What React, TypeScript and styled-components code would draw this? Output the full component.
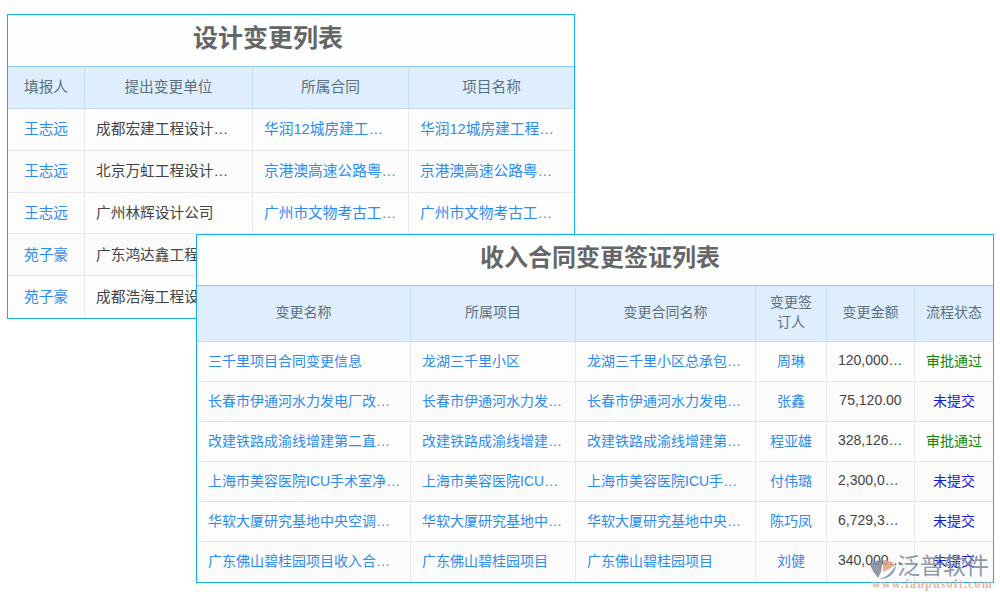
import styled, { createGlobalStyle } from "styled-components";

const GlobalStyle = createGlobalStyle`
  html, body {
    margin: 0;
    padding: 0;
    background: #fff;
    font-family: "Liberation Sans", "Noto Sans CJK SC", sans-serif;
  }
`;

const Page = styled.div`
  position: relative;
  width: 1000px;
  height: 600px;
  padding: 14px 0 0 7px;
  box-sizing: border-box;
  overflow: hidden;
`;

const Panel = styled.div<{ $width: number }>`
  width: ${({ $width }) => $width}px;
  box-sizing: border-box;
  border: 1px solid #12b0ee;
  background: #fff;
`;

const FrontPanel = styled(Panel)`
  position: absolute;
  left: 196px;
  top: 234px;
`;

const TitleBar = styled.div<{ $height: number; $size: number; $shift: number }>`
  height: ${({ $height }) => $height}px;
  box-sizing: border-box;
  padding-bottom: 9px;
  padding-left: ${({ $shift }) => ($shift > 0 ? $shift * 2 : 0)}px;
  padding-right: ${({ $shift }) => ($shift < 0 ? -$shift * 2 : 0)}px;
  display: flex;
  align-items: center;
  justify-content: center;
  font-size: ${({ $size }) => $size}px;
  font-weight: 700;
  color: #666;
  background: #fdfefe;
`;

const Table = styled.table<{ $size: number }>`
  width: 100%;
  table-layout: fixed;
  border-collapse: separate;
  border-spacing: 0;
  font-size: ${({ $size }) => $size}px;
`;

const HeadRow = styled.tr<{ $height: number }>`
  height: ${({ $height }) => $height}px;
  background: #deeefc;
`;

const HeadCell = styled.th<{ $nudge: number }>`
  box-sizing: border-box;
  padding: 0 10px ${({ $nudge }) => $nudge}px;
  font-weight: 400;
  line-height: 20px;
  color: #5b7082;
  text-align: center;
  border-top: 1px solid #8fc8ee;
  border-bottom: 1px solid #c5def2;
  border-right: 1px solid #c5def2;
  &:last-child {
    border-right: 0;
  }
`;

const Row = styled.tr<{ $height: number }>`
  height: ${({ $height }) => $height}px;
  background: #fdfdfe;
  &:nth-child(even) {
    background: #fbfbfc;
  }
`;

const colors = { link: "#2d8cf0", text: "#444", green: "#0a8a0a", blue: "#1a1ae0" };

const Cell = styled.td<{
  $tone: keyof typeof colors;
  $center?: boolean;
  $pad: number;
  $padEnd: number;
  $nudge: number;
}>`
  box-sizing: border-box;
  padding: 0 ${({ $padEnd }) => $padEnd}px ${({ $nudge }) => $nudge}px ${({ $pad }) => $pad}px;
  color: ${({ $tone }) => colors[$tone]};
  text-align: ${({ $center }) => ($center ? "center" : "left")};
  border-bottom: 1px solid #e8e8e8;
  border-right: 1px solid #e8e8e8;
  white-space: nowrap;
  overflow: hidden;
  text-overflow: ellipsis;
  &:last-child {
    border-right: 0;
  }
  tr:last-child > & {
    border-bottom: 0;
  }
`;

const Watermark = styled.div`
  position: absolute;
  left: 870px;
  top: 553px;
  width: 126px;
  display: flex;
  flex-wrap: wrap;
  align-items: flex-end;
  opacity: 0.88;
`;

const MarkLogo = styled.svg`
  display: block;
`;

const MarkName = styled.span`
  font-size: 23px;
  line-height: 26px;
  color: #7f8c99;
`;

const MarkUrl = styled.span`
  width: 100%;
  font-family: "Liberation Serif", serif;
  font-size: 12px;
  font-weight: 700;
  line-height: 11px;
  letter-spacing: 1.15px;
  color: #e3ab92;
  padding-left: 2px;
`;

type Col = {
  title: string;
  width: number;
  tone: keyof typeof colors;
  center?: boolean;
  pad?: number;
  padEnd?: number;
};

const designCols: Col[] = [
  { title: "填报人", width: 77, tone: "link", center: true, pad: 5 },
  { title: "提出变更单位", width: 168, tone: "text" },
  { title: "所属合同", width: 156, tone: "link" },
  { title: "项目名称", width: 165, tone: "link" },
];

const designRows = [
  ["王志远", "成都宏建工程设计有限公司", "华润12城房建工程合同", "华润12城房建工程项目部"],
  ["王志远", "北京万虹工程设计有限公司", "京港澳高速公路粤境段合同", "京港澳高速公路粤境段项目"],
  ["王志远", "广州林辉设计公司", "广州市文物考古工程合同", "广州市文物考古工程项目"],
  ["苑子豪", "广东鸿达鑫工程设计有限公司", "广东某工程合同", "广东某工程项目"],
  ["苑子豪", "成都浩海工程设计有限公司", "成都某工程合同", "成都某工程项目"],
];

const incomeCols: Col[] = [
  { title: "变更名称", width: 214, tone: "link", padEnd: 8 },
  { title: "所属项目", width: 165, tone: "link" },
  { title: "变更合同名称", width: 180, tone: "link" },
  { title: "变更签订人", width: 71, tone: "link", center: true },
  { title: "变更金额", width: 88, tone: "text", center: true },
  { title: "流程状态", width: 78, tone: "blue", center: true, pad: 5 },
];

const incomeRows = [
  ["三千里项目合同变更信息", "龙湖三千里小区", "龙湖三千里小区总承包工程合同", "周琳", "120,000.00", "审批通过"],
  ["长春市伊通河水力发电厂改造变更", "长春市伊通河水力发电厂", "长春市伊通河水力发电厂合同", "张鑫", "75,120.00", "未提交"],
  ["改建铁路成渝线增建第二直线变更", "改建铁路成渝线增建第二线", "改建铁路成渝线增建第二线合同", "程亚雄", "328,126.00", "审批通过"],
  ["上海市美容医院ICU手术室净化变更", "上海市美容医院ICU手术室", "上海市美容医院ICU手术室合同", "付伟璐", "2,300,000.00", "未提交"],
  ["华软大厦研究基地中央空调变更", "华软大厦研究基地中央空调", "华软大厦研究基地中央空调合同", "陈巧凤", "6,729,300.00", "未提交"],
  ["广东佛山碧桂园项目收入合同变更", "广东佛山碧桂园项目", "广东佛山碧桂园项目", "刘健", "340,000.00", "未提交"],
];

const DataTable = ({
  cols,
  rows,
  size,
  headHeight,
  rowHeight,
  headNudge,
  rowNudge,
}: {
  cols: Col[];
  rows: string[][];
  size: number;
  headHeight: number;
  rowHeight: number;
  headNudge: number;
  rowNudge: number;
}) => (
  <Table $size={size}>
    <colgroup>
      {cols.map((c) => (
        <col key={c.title} width={c.width} />
      ))}
    </colgroup>
    <thead>
      <HeadRow $height={headHeight}>
        {cols.map((c) => (
          <HeadCell key={c.title} $nudge={headNudge}>
            {c.title}
          </HeadCell>
        ))}
      </HeadRow>
    </thead>
    <tbody>
      {rows.map((row, i) => (
        <Row key={i} $height={rowHeight}>
          {row.map((text, j) => (
            <Cell
              key={j}
              $pad={cols[j].pad ?? 11}
              $padEnd={cols[j].padEnd ?? cols[j].pad ?? 11}
              $nudge={rowNudge}
              $center={cols[j].center}
              $tone={text === "审批通过" ? "green" : cols[j].tone}
            >
              {text}
            </Cell>
          ))}
        </Row>
      ))}
    </tbody>
  </Table>
);

const App = () => (
  <Page>
    <GlobalStyle />
    <Panel $width={568}>
      <TitleBar $height={51} $size={25} $shift={-23}>设计变更列表</TitleBar>
      <DataTable
        cols={designCols}
        rows={designRows}
        size={14.7}
        headHeight={43}
        rowHeight={41.8}
        headNudge={2}
        rowNudge={3}
      />
    </Panel>
    <FrontPanel $width={798}>
      <TitleBar $height={50} $size={24} $shift={5}>收入合同变更签证列表</TitleBar>
      <DataTable
        cols={incomeCols}
        rows={incomeRows}
        size={14}
        headHeight={57}
        rowHeight={40}
        headNudge={4}
        rowNudge={4}
      />
    </FrontPanel>
    <Watermark>
      <MarkLogo width="27" height="20" viewBox="0 0 27 20">
        <path d="M13 1 C7 1 2 3 0 6 C2 11 5 15 8 19 L11 13 Z" fill="#7f8c99" />
        <path d="M13 1 C18 1 23 3 25 6 C21 9 17 11 13 13 Z" fill="#e0a080" />
        <path d="M9 20 C16 19 22 13 26 6 C26 13 19 21 9 20 Z" fill="#7f93a5" />
      </MarkLogo>
      <MarkName>泛普软件</MarkName>
      <MarkUrl>www.fanpusoft.com</MarkUrl>
    </Watermark>
  </Page>
);

export default App;
